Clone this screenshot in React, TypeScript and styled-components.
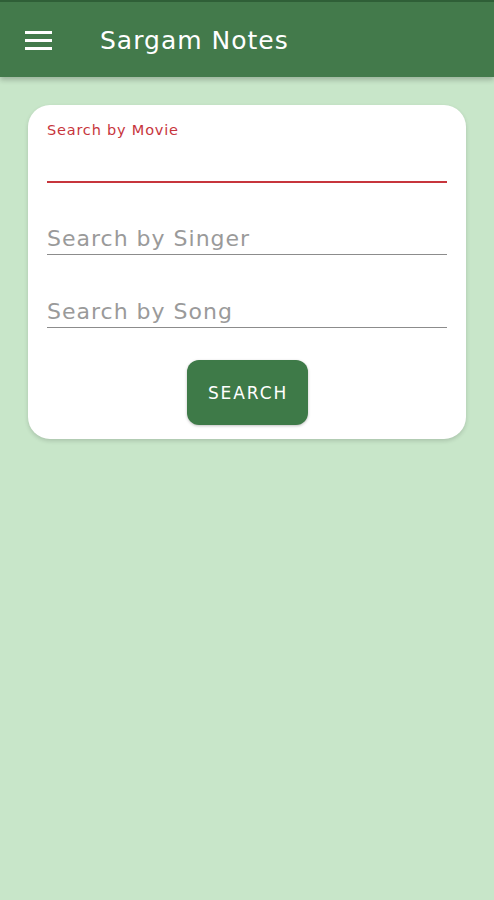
import React from "react";
import styled, { createGlobalStyle } from "styled-components";

const Global = createGlobalStyle`
  html, body { margin: 0; padding: 0; }
  body { background: #c8e6c9; font-family: "DejaVu Sans", "Open Sans", sans-serif; }
  * { box-sizing: border-box; }
`;

const Page = styled.div`
  min-height: 900px;
  background: #c8e6c9;
  display: flex;
  flex-direction: column;
`;

const Toolbar = styled.header`
  height: 77px;
  background: #437a4b;
  border-top: 2px solid #2f5f37;
  display: flex;
  align-items: center;
  padding-left: 25px;
  gap: 48px;
  box-shadow: 0 3px 5px rgba(0, 0, 0, 0.22);
`;

const Title = styled.h1`
  margin: 0;
  font-size: 25px;
  font-weight: 400;
  color: #ffffff;
  letter-spacing: 1px;
  padding-top: 2px;
`;

const Content = styled.main`
  padding: 28px 28px 0 28px;
`;

const Card = styled.div`
  background: #ffffff;
  border-radius: 22px;
  padding: 16px 19px 14px 19px;
  box-shadow: 0 2px 4px rgba(0, 0, 0, 0.15);
  display: flex;
  flex-direction: column;
`;

const Field = styled.div<{ $focused?: boolean }>`
  display: flex;
  flex-direction: column;
  height: ${(p) => (p.$focused ? "62px" : "50px")};
  justify-content: ${(p) => (p.$focused ? "space-between" : "flex-end")};
  border-bottom: ${(p) => (p.$focused ? "2px solid #c7353c" : "1.5px solid #8c8c8c")};
`;

const Gap = styled.div<{ $h: number }>`
  height: ${(p) => p.$h}px;
`;

const SmallLabel = styled.span`
  font-size: 14.5px;
  color: #c7353c;
  letter-spacing: 0.8px;
  line-height: 18px;
`;

const Placeholder = styled.span`
  font-size: 22px;
  color: #9a9a9a;
  letter-spacing: 1px;
  line-height: 28px;
  padding-bottom: 1px;
`;

const ButtonRow = styled.div`
  display: flex;
  justify-content: center;
  margin-top: 32px;
`;

const Button = styled.button`
  width: 121px;
  height: 65px;
  border: none;
  border-radius: 12px;
  background: #3e7a48;
  color: #ffffff;
  font-family: "DejaVu Sans", "Open Sans", sans-serif;
  font-size: 17px;
  letter-spacing: 1.9px;
  padding: 0 0 0 2px;
  box-shadow: 0 1px 3px rgba(0, 0, 0, 0.25);
`;

const Menu = () => (
  <svg width="27" height="22" viewBox="0 0 27 22">
    <rect x="0" y="2" width="27" height="3" fill="#fff" />
    <rect x="0" y="10" width="27" height="3" fill="#fff" />
    <rect x="0" y="18" width="27" height="3" fill="#fff" />
  </svg>
);

export default function App() {
  return (
    <>
      <Global />
      <Page>
        <Toolbar>
          <Menu />
          <Title>Sargam Notes</Title>
        </Toolbar>
        <Content>
          <Card>
            <Field $focused>
              <SmallLabel>Search by Movie</SmallLabel>
            </Field>
            <Gap $h={22} />
            <Field>
              <Placeholder>Search by Singer</Placeholder>
            </Field>
            <Gap $h={23} />
            <Field>
              <Placeholder>Search by Song</Placeholder>
            </Field>
            <ButtonRow>
              <Button>SEARCH</Button>
            </ButtonRow>
          </Card>
        </Content>
      </Page>
    </>
  );
}
